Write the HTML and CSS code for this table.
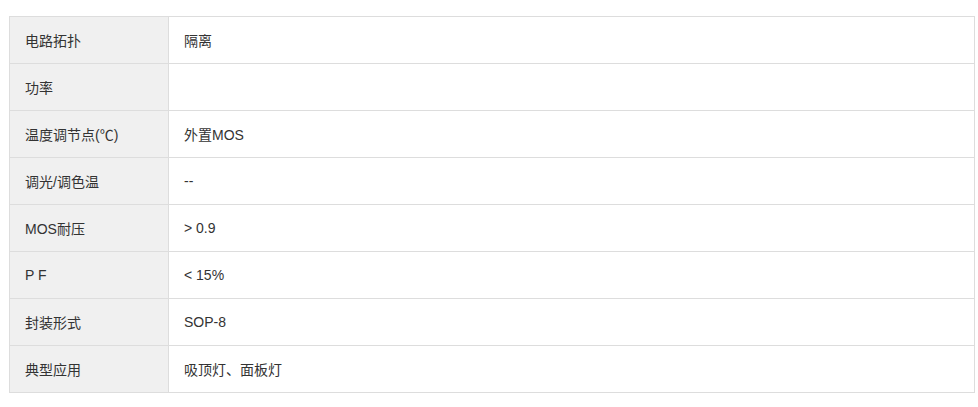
FILE: index.html
```html
<!DOCTYPE html>
<html lang="zh">
<head>
<meta charset="utf-8">
<link rel="stylesheet" href="styles.css">
</head>
<body>
<table class="spec">
  <tbody>
    <tr><th>电路拓扑</th><td>隔离</td></tr>
    <tr><th>功率</th><td></td></tr>
    <tr><th>温度调节点(℃)</th><td>外置MOS</td></tr>
    <tr><th>调光/调色温</th><td>--</td></tr>
    <tr><th>MOS耐压</th><td>&gt; 0.9</td></tr>
    <tr><th>P F</th><td>&lt; 15%</td></tr>
    <tr><th>封装形式</th><td>SOP-8</td></tr>
    <tr><th>典型应用</th><td>吸顶灯、面板灯</td></tr>
  </tbody>
</table>
</body>
</html>
```

FILE: styles.css
```css
html, body {
  margin: 0;
  padding: 0;
  background: #fff;
}
body {
  padding: 16px 3px 0 9px;
  font-family: "Liberation Sans", Arial, "Noto Sans CJK SC", sans-serif;
  font-size: 14px;
  color: #333;
}
.spec {
  width: 966px;
  border-collapse: collapse;
  border: 1px solid #ddd;
}
.spec th,
.spec td {
  height: 47px;
  padding: 0 15px;
  border: 1px solid #ddd;
  text-align: left;
  font-weight: normal;
  vertical-align: middle;
  box-sizing: border-box;
}
.spec th {
  width: 159px;
  background: #f0f0f0;
}
.spec td {
  background: #fff;
}
```
